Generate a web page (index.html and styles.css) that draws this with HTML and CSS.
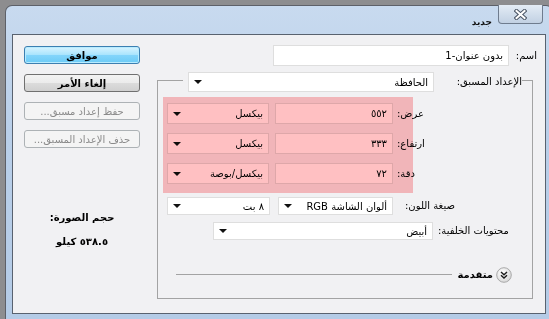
FILE: index.html
```html
<!DOCTYPE html>
<html lang="ar">
<head>
    <meta charset="UTF-8">
    <title>جديد</title>
    <link rel="stylesheet" href="styles.css">
</head>
<body>
    <div class="window">
        <!-- شريط العنوان -->
        <div class="titlebar">
            <div class="close">
                <svg width="13" height="11" viewBox="0 0 13 11">
                    <path d="M2.5 2 L10.5 9 M10.5 2 L2.5 9" stroke="#4a5565" stroke-width="4" stroke-linecap="square"/>
                    <path d="M2.5 2 L10.5 9 M10.5 2 L2.5 9" stroke="#fff" stroke-width="2" stroke-linecap="square"/>
                </svg>
            </div>
            <span class="title">جديد</span>
        </div>

        <div class="client">
            <!-- النموذج -->
            <div class="form">
                <div class="name-row">
                    <span class="label">اسم:</span>
                    <div class="field name-field">بدون عنوان-1</div>
                </div>

                <div class="group">
                    <div class="legend">
                        <span class="label">الإعداد المسبق:</span>
                        <div class="combo preset"><span>الحافظة</span><i class="arrow"></i></div>
                    </div>

                    <div class="dims">
                        <div class="highlight"></div>
                        <div class="row">
                            <span class="label">عرض:</span>
                            <div class="field value">٥٥٢</div>
                            <div class="combo unit"><span>بيكسل</span><i class="arrow"></i></div>
                        </div>
                        <div class="row">
                            <span class="label">ارتفاع:</span>
                            <div class="field value">٣٣٣</div>
                            <div class="combo unit"><span>بيكسل</span><i class="arrow"></i></div>
                        </div>
                        <div class="row">
                            <span class="label">دقة:</span>
                            <div class="field value">٧٢</div>
                            <div class="combo unit"><span>بيكسل/بوصة</span><i class="arrow"></i></div>
                        </div>
                    </div>

                    <div class="mode-row">
                        <span class="label">صيغة اللون:</span>
                        <div class="combo mode"><span>ألوان الشاشة RGB</span><i class="arrow"></i></div>
                        <div class="combo bits"><span>٨ بت</span><i class="arrow"></i></div>
                    </div>

                    <div class="bg-row">
                        <span class="label">محتويات الخلفية:</span>
                        <div class="combo bg"><span>أبيض</span><i class="arrow"></i></div>
                    </div>

                    <div class="advanced">
                        <svg class="chevron" width="16" height="16" viewBox="0 0 16 16">
                            <defs>
                                <radialGradient id="knob" cx="0.4" cy="0.35" r="0.7">
                                    <stop offset="0" stop-color="#ffffff"/>
                                    <stop offset="1" stop-color="#d6d6d6"/>
                                </radialGradient>
                            </defs>
                            <circle cx="8" cy="8" r="7.3" fill="url(#knob)" stroke="#a9a9a9"/>
                            <path d="M5 5 L8 7.8 L11 5 M5 8.3 L8 11.1 L11 8.3" fill="none" stroke="#1c1c1c" stroke-width="1.4"/>
                        </svg>
                        <span class="adv-text">متقدمة</span>
                        <span class="adv-line"></span>
                    </div>
                </div>
            </div>

            <!-- الأزرار -->
            <div class="side">
                <button class="btn default">موافق</button>
                <button class="btn">إلغاء الأمر</button>
                <button class="btn" disabled>حفظ إعداد مسبق...</button>
                <button class="btn" disabled>حذف الإعداد المسبق...</button>

                <div class="size-title">حجم الصورة:</div>
                <div class="size-value">٥٣٨.٥ كيلو</div>
            </div>
        </div>
    </div>
</body>
</html>
```

FILE: styles.css
```css
/* نافذة حوار جديد - نمط ويندوز 7 */
:root {
    --client: #f1f1f3;
    --text: #000;
    --line: #a3a3a3;
}

* {
    margin: 0;
    padding: 0;
    box-sizing: border-box;
}

html {
    overflow: hidden;
}

body {
    width: 549px;
    height: 319px;
    overflow: hidden;
    background: #8d8d8f;
    font-family: 'DejaVu Sans', 'Noto Sans', sans-serif;
    font-size: 10px;
    color: var(--text);
    padding: 5px 0 0 5px;
}

.window {
    direction: rtl;
    width: 548px;
    height: 314px;
    border: 1px solid #5d6068;
    border-bottom: none;
    border-radius: 7px 7px 0 0;
    padding: 0 6px;
    background: linear-gradient(180deg, #c8daef 0%, #b9cfe9 40%, #b4cbe6 100%);
}

/* شريط العنوان */
.titlebar {
    height: 28px;
    display: flex;
    align-items: flex-start;
}

.close {
    width: 45px;
    height: 19px;
    margin-top: -1px;
    margin-right: 3px;
    border: 1px solid #6f7c8e;
    border-top: none;
    border-radius: 0 0 4px 4px;
    background: linear-gradient(180deg, #e4ecf5 0%, #d2deec 50%, #c2d1e3 100%);
    display: flex;
    align-items: center;
    justify-content: center;
}

.title {
    margin-right: 6px;
    margin-top: 9px;
    font-weight: bold;
    font-size: 9px;
    line-height: 14px;
    color: #101010;
}

/* منطقة المحتوى */
.client {
    width: 534px;
    height: 280px;
    border: 1px solid #59626f;
    background: var(--client);
    display: flex;
}

.form {
    width: 388px;
    flex: none;
    padding-top: 10px;
}

.label {
    white-space: nowrap;
    line-height: 14px;
    flex: none;
}

.field,
.combo {
    background: #fff;
    border: 1px solid #dedede;
    white-space: nowrap;
    display: flex;
    align-items: center;
    padding: 0 5px;
    flex: none;
}

.combo {
    justify-content: space-between;
}

.arrow {
    width: 0;
    height: 0;
    border-left: 4px solid transparent;
    border-right: 4px solid transparent;
    border-top: 4px solid #111;
}

.name-row {
    display: flex;
    align-items: center;
    padding-right: 8px;
}

.name-row .label {
    width: 28px;
}

.name-field {
    width: 236px;
    height: 21px;
}

/* مجموعة الإعداد المسبق */
.group {
    margin-top: 14px;
    margin-right: 12px;
    width: 376px;
    height: 219px;
    border: 1px solid var(--line);
}

.legend {
    margin-top: -9px;
    margin-right: 10px;
    width: 339px;
    height: 20px;
    padding-left: 5px;
    background: var(--client);
    display: flex;
    align-items: center;
}

.legend .label {
    width: 72px;
}

.preset {
    margin-right: 16px;
    width: 246px;
    height: 20px;
}

.dims {
    position: relative;
    margin-top: 5px;
    padding: 6px 101px 9px 0;
    display: flex;
    flex-direction: column;
    gap: 9px;
}

.highlight {
    position: absolute;
    left: 5px;
    top: 0;
    width: 250px;
    height: 96px;
    background: #ffc0c2;
    mix-blend-mode: multiply;
}

.row {
    display: flex;
    align-items: center;
    height: 21px;
}

.row .label {
    width: 34px;
    text-align: left;
}

.value {
    margin-right: 4px;
    width: 118px;
    height: 21px;
}

.unit {
    margin-right: 6px;
    width: 102px;
    height: 21px;
}

.mode-row {
    margin-top: 4px;
    padding-right: 76px;
    display: flex;
    align-items: center;
    height: 18px;
}

.mode-row .label {
    width: 51px;
    text-align: left;
}

.mode {
    margin-right: 12px;
    width: 115px;
    height: 18px;
}

.bits {
    margin-right: 8px;
    width: 103px;
    height: 18px;
}

.bg-row {
    margin-top: 7px;
    padding-right: 19px;
    display: flex;
    align-items: center;
    height: 18px;
}

.bg-row .label {
    width: 75px;
    text-align: left;
}

.bg {
    margin-right: 5px;
    width: 220px;
    height: 18px;
}

.advanced {
    margin-top: 27px;
    padding: 0 20px 0 18px;
    display: flex;
    align-items: center;
    height: 15px;
}

.chevron {
    flex: none;
}

.adv-text {
    margin-right: 3px;
    font-weight: bold;
    white-space: nowrap;
}

.adv-line {
    flex: 1;
    height: 1px;
    margin-right: 5px;
    background: var(--line);
}

/* عمود الأزرار */
.side {
    width: 144px;
    flex: none;
    padding: 11px 17px 0 11px;
    display: flex;
    flex-direction: column;
    align-items: center;
}

.btn {
    width: 116px;
    height: 18px;
    margin-bottom: 10px;
    border: 1px solid #707070;
    border-radius: 3px;
    background: linear-gradient(180deg, #f3f3f3 0%, #ebebeb 49%, #dcdcdc 50%, #d0d0d0 100%);
    font-family: inherit;
    font-size: 10px;
    font-weight: bold;
    color: #000;
    direction: rtl;
}

.btn.default {
    border-color: #3c7fb1;
    background: linear-gradient(180deg, #d9f4ff 0%, #a9e4fd 49%, #84d5fb 50%, #6ccbf6 100%);
    box-shadow: inset 0 0 0 1px #b8ecff;
}

.btn:disabled {
    border-color: #adb2b5;
    background: #f4f4f4;
    color: #8a8a8a;
    font-weight: normal;
}

.size-title {
    margin-top: 53px;
    font-weight: bold;
    line-height: 14px;
    white-space: nowrap;
}

.size-value {
    margin-top: 10px;
    font-weight: bold;
    line-height: 14px;
    white-space: nowrap;
}
```
